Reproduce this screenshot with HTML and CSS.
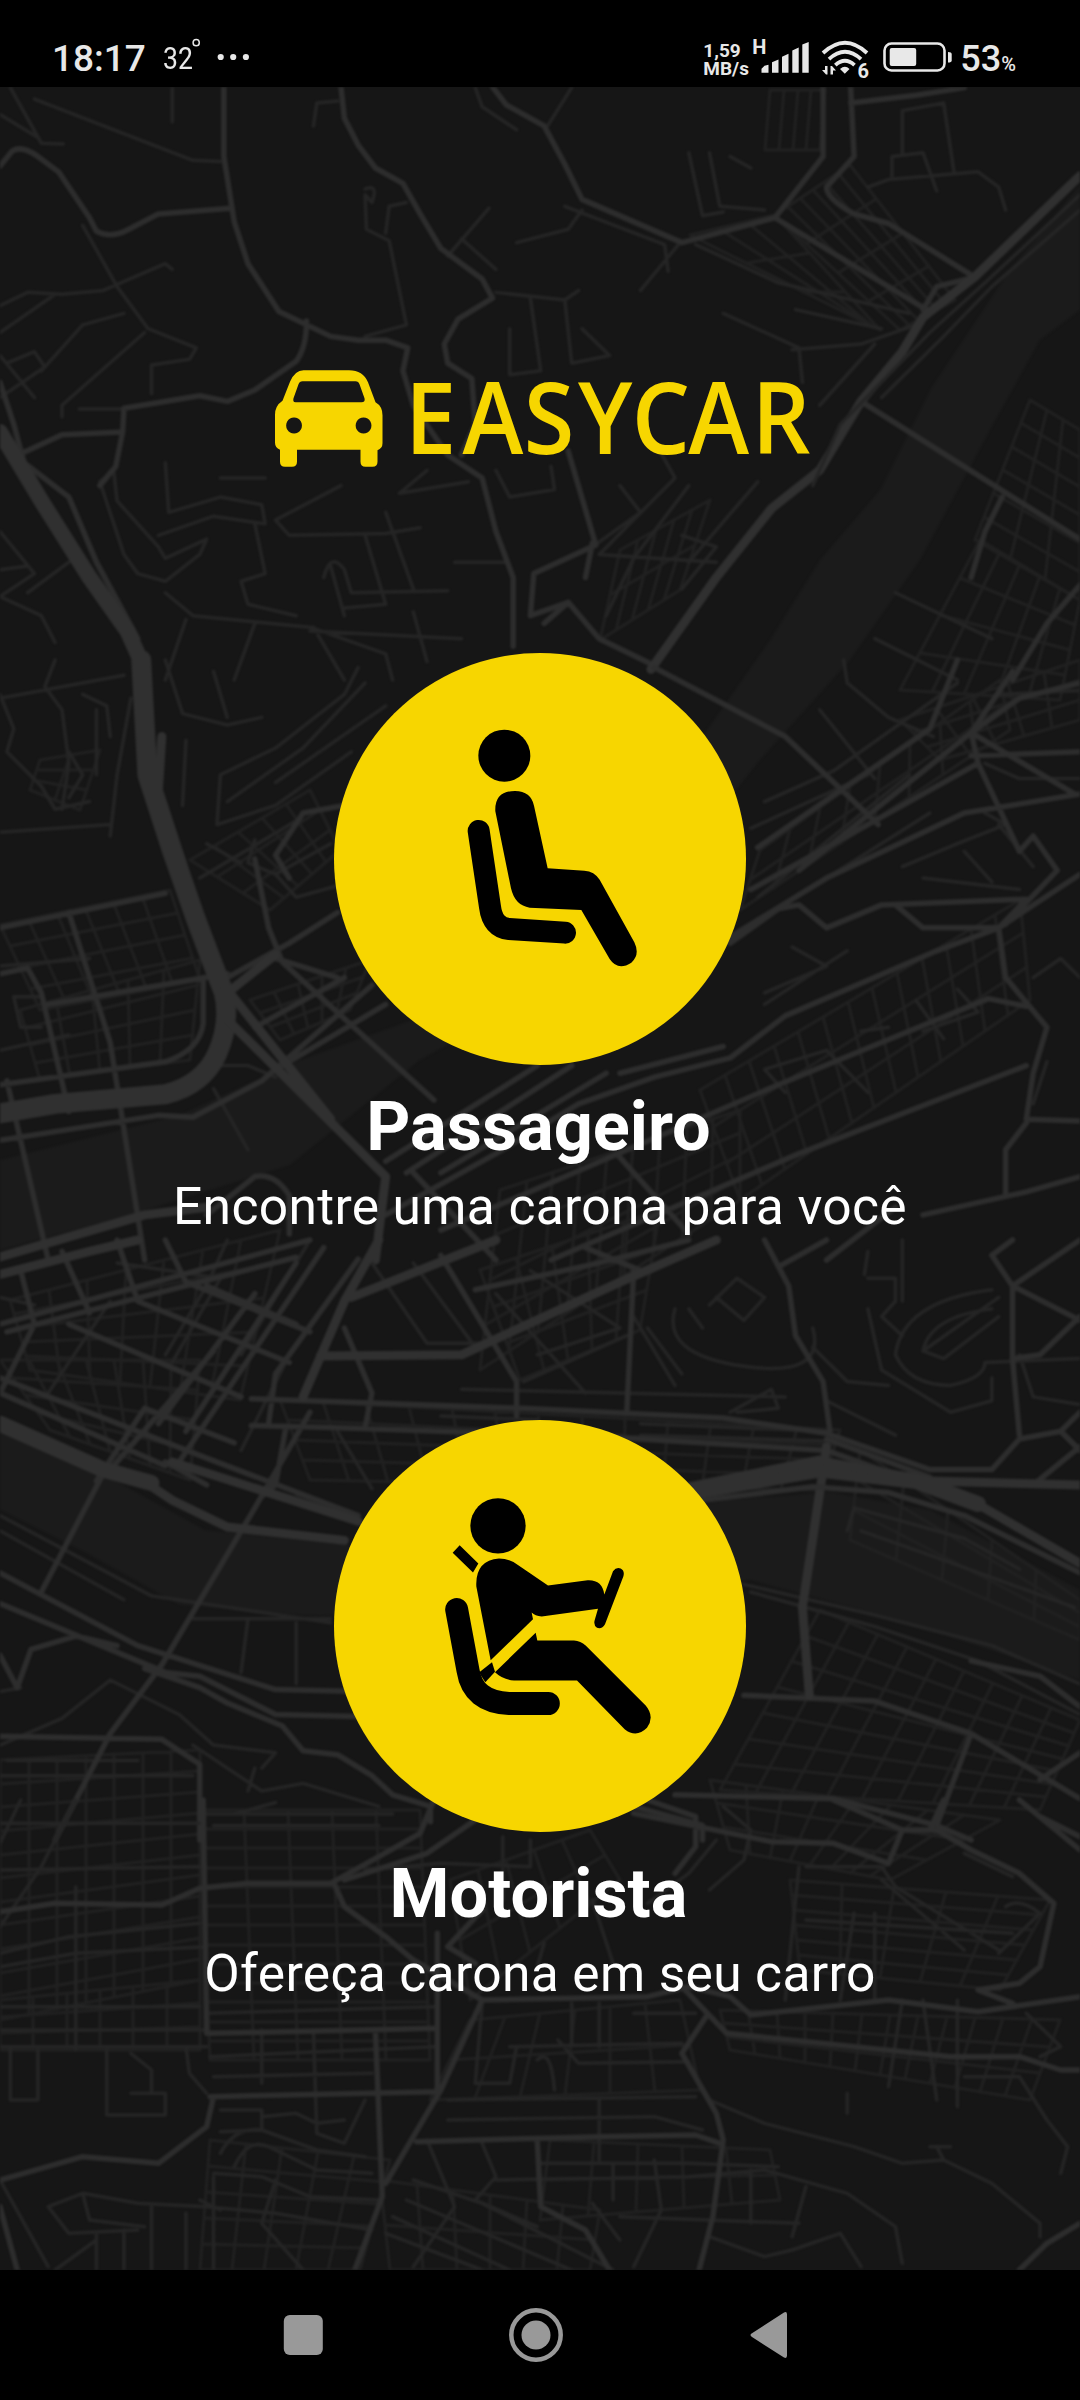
FILE: index.html
```html
<!DOCTYPE html>
<html lang="pt-BR">
<head>
<meta charset="utf-8">
<title>EasyCar</title>
<link rel="stylesheet" href="styles.css">
</head>
<body>
<div class="phone">
  <header class="status">
    <span class="clock">18:17</span>
    <span class="temp">32</span>
    <svg class="more" width="60" height="40" viewBox="190 34 60 40" aria-hidden="true">
      <circle cx="196.200" cy="42.700" r="3.100" fill="none" stroke="#e8e8e8" stroke-width="1.500"/>
      <circle cx="220.700" cy="57" r="3.100"/><circle cx="233.200" cy="57" r="3.100"/><circle cx="245.900" cy="57" r="3.100"/>
    </svg>
    <span class="spacer"></span>
    <span class="speed"><span>1,59</span><span>MB/s</span></span>
    <span class="net">H</span>
    <svg class="signal" width="48" height="32" viewBox="761 42 48 32" aria-hidden="true">
      <path d="M761.500 72.700v-4l3-3 4-1v8zM772 72.700v-10.500l6.500-2.700v13.200zM782 72.700v-16l6.500-3v19zM792.300 72.700V50.500l6.400-3v25.200zM802.300 72.700V44.500l6.400-2.500v30.700z"/>
    </svg>
    <svg class="wifi" width="54" height="46" viewBox="820 39 54 46" aria-hidden="true">
      <g fill="none" stroke="#e8e8e8" stroke-width="3.800"><path d="M823 53Q845 32.500 867 53M829 59.200Q845 44.500 861 59.200M835.300 65.200Q845 56.500 854.500 65.200"/></g>
      <path d="M840 69q5-4.500 9.500 0l-4.700 4.700zM825 66h2.500v8.500h-1.500l-4-4.500h3zM830.500 74.500V66h1.500l4 4.500h-3v4z"/>
      <text x="857.500" y="77.500" class="wifi-gen">6</text>
    </svg>
    <svg class="battery" width="70" height="32" viewBox="882 41 70 32" aria-hidden="true">
      <rect x="884.500" y="43.500" width="60" height="27" rx="7" fill="none" stroke="#e8e8e8" stroke-width="2.600"/>
      <rect x="889.700" y="48" width="26.500" height="18" rx="2"/><path d="M948 52q3.700 0 3.700 2v6.500q0 2-3.700 2z"/>
    </svg>
    <span class="pct">53<small>%</small></span>
  </header>

  <main class="home">
    <svg class="map" viewBox="0 87 1080 2183" aria-hidden="true">
      <g class="water">
        <path d="M1080 185L1010 270 930 390 880 490 820 560 770 640 700 740 560 920 440 1010 300 1060 180 1115 0 1160V1250L130 1215 290 1165 420 1060 600 960 760 760 850 660 920 560 990 430 1040 340 1080 310z"/>
        <path d="M0 1430L105 1475 205 1530 350 1545 540 1540 725 1500 830 1492 930 1510 1080 1590V1680L900 1620 750 1580 540 1620 300 1615 180 1605 90 1555 0 1510z"/>
      </g>
      <g id="blocks"></g>
      <g class="upper">
        <path class="lane" d="M0 90L55 150M15 20L60 165 92 167M50 50L280 210 320 213M0 590L40 555 90 560 150 550 240 480 250 495M120 380L170 540 215 650 285 700 275 730 220 745V820M0 660L80 560M60 760L120 640 180 610M90 880V850L210 660M0 720L50 830M0 830L65 750 50 710 10 740M115 860H180M530 285Q550 270 540 320 L530 300 532 390 565 420 590 640 530 670M560 400L565 330 590 320M650 460L710 335M670 415L720 495M750 425L825 390 845 340M690 20L700 70 750 130M830 20L795 120M930 550L985 430M820 330L965 430 970 500M720 555L820 575 840 550M770 570L785 760 740 770V650M820 575L830 740 885 720 845 650M455 120L460 60 490 55M250 20L250 110M1000 190L1020 355 1050 345M1030 190L1045 330 1110 340M1060 200L1090 230M1050 610L1160 700 1165 790M1150 705L1250 690 1330 640M1270 690L1190 850M1010 430L1130 530 1320 610M1155 600L1280 650M1310 80L1370 60 1385 240M1260 280L1290 260 1420 240 1450 280 1460 340M1295 250V200L1340 190 1360 290M1310 190V80M145 1050L165 1020M165 1020L170 1100 230 1220 240 1250 300 1200 290 1240 240 1310 200 1290 180 1240 145 1050M240 1000L245 1130 320 1090 380 1110 385 1160 310 1140 230 1190M320 1040L385 1040M495 1060L400 1150 420 1190 560 1185 610 1170M560 1130L600 1330M530 1190L560 1370 500 1380M480 1270L500 1400M470 1300Q480 1230 500 1280L510 1340 650 1335M370 1160L385 1290 350 1310 360 1370 430 1400M580 1080L620 1020M580 1080L680 1050M800 1010L805 1070 740 1090 720 1020M900 1060L930 1130 860 1220M955 960L980 1040 870 1240M1000 1060L920 1250 880 1400M990 1190L1040 1220 990 1330M1100 1050L1000 1260M0 1180L50 1290 0 1350 60 1400 80 1470M0 1280L40 1270M660 1260L735 1260M240 1340L280 1400 450 1430 560 1500 570 1568M270 1410L240 1568M370 1420L340 1568M455 1430L500 1568M450 1440L670 1460M600 1390L620 1520M100 1260L40 1340M870 1240L1040 1260M1300 1340L1440 1460M1270 1460L1390 1568"/>
        <path class="street" d="M0 225L18 185Q32 170 55 200L85 240 130 360 140 395Q160 415 185 392L230 350 335 335M325 18L325 200 340 370 360 480 405 605 480 670 520 680 560 680 592 700 585 760 600 850 650 980 700 1040 720 1180 745 1300V1480M445 630Q445 700 430 735L370 810 330 840 290 825 180 858 178 920 90 927 20 985M178 920L168 1010 145 1060M495 18L500 100 520 170 545 230 585 270 610 350 640 440 700 520 715 570 665 625 645 690 650 740 685 780 690 900 670 980M715 18L735 65 790 120 820 220 845 312 990 425 1125 360 1195 200V20M1125 360L1345 600M1235 20L1240 200 1200 280Q1200 310 1240 350L1290 375 1415 515 1360 540 1340 600M1235 60L1330 40 1400 20M825 970L865 1215 775 1290 770 1400 825 1365 870 1460 950 1530M825 1365L790 1420M860 1210L850 1300M1250 840L1470 1090 1568 1200M1455 1090L1430 1180 1410 1300M1568 1320L1520 1420 1470 1568M0 790L20 900 35 1000 100 1090 140 1260 200 1460"/>
        <path class="avenue thin" d="M1568 250L1415 515 1340 620 1310 710 1250 840 1190 1020 1120 1120 1040 1300 945 1540"/>
        <path class="lane" d="M1568 300L1430 530 1350 660 1220 900 1180 1060M1568 340L1440 540 1370 670 1280 830"/>
        <path class="avenue" d="M0 920L60 1100 130 1300 185 1440 205 1520"/>
      </g>
      <g class="middle">
        <path class="lane" d="M80 0L65 70 90 130 100 270 90 390M0 100L180 40M0 90L20 180 10 240 60 330 80 390 130 370M120 90L155 120 160 200M140 130V300M190 100L170 300 160 460M0 450L160 430M100 240L120 300 100 360M240 0L265 140 330 170 380 150M270 210L265 380M310 30L330 150M520 20L500 90 400 230 320 300 315 430 400 380 510 240M530 60L440 230 330 370M560 120L400 320M370 470L360 530 400 560 430 620 490 590M290 570L430 420M400 560L480 480M300 480L350 530M0 800L130 780M20 880H60M20 880L30 960H60M1225 0L1230 60 1290 150 1355 200M1190 130L1270 310M1110 370L1210 290 1390 60M1090 440L1260 300M1320 300L1100 620M1350 400L1130 650M1430 270L1480 310 1568 310M1450 90L1568 80M1310 540L1390 480 1460 430 1430 400M1340 570L1480 600M1400 500L1440 580M1450 430L1500 540M1110 870L1200 800 1150 750M1110 900L1230 760M1330 890L1370 990M1390 860L1420 920 1340 970M1250 970L1290 960M1500 830L1540 780 1568 830M1520 1050L1500 1160M1140 1130L1110 1070 1200 1020 1260 1130M270 1130L300 1060 360 1060 400 1090M310 1120L360 1280M0 1020L100 980"/>
        <path class="street" d="M0 700L240 610M70 900L330 820M0 820L40 805 60 870 100 1180M100 660L160 1000 210 1568M0 1110L240 1050Q290 1020 295 950V830M0 1255L230 1190 280 1195 380 1100 540 850M0 1200L150 1140M10 1100L70 1568M330 830L420 740 490 660M370 520L390 700 410 790 630 1150M420 570L400 510 440 400 500 380M400 780L490 830M950 20L1140 200 1275 430M1390 0L1350 180 1100 490M1470 30L1410 190 1160 550M1568 60L1480 100 1410 190 1420 270 1090 600M1410 190L1560 350M1410 250L1568 240M1420 270L1480 500 1500 460 1535 550 1460 690M1060 740L1130 650 1160 640 1200 700 1280 640 1490 625 1450 700 1340 700 1300 640M1568 560L1450 700 1360 760 1140 930 1060 1040 950 1090 840 1160 720 1290 560 1450M1450 700L1460 830 1520 960 1500 1080 1490 1200 1568 1205M1490 905L1435 885 1130 1110 640 1490M1490 1060L1160 1290 800 1568M1490 1210L1460 1280V1400M1568 350L1400 400 1200 570 900 900M880 1080L640 1340M830 1060L590 1340M780 1060L560 1310M1050 1010L900 1080M300 1450L370 1350Q400 1340 420 1400L420 1500M560 900L410 1060M370 960L500 830M600 1340L720 1568M900 1300L1000 1500M1340 1450L1490 1390 1568 1350M1200 1568L1300 1430"/>
        <path class="avenue wide" d="M205 0L214 300 250 500 285 680 325 870Q335 950 315 1030 295 1110 240 1135L80 1160 0 1185"/>
        <path class="avenue thin" d="M235 200L230 340 290 670M325 850L480 1200M400 770L330 870M330 940L560 1350 545 1568M0 1560L210 1450 300 1430"/>
      </g>
      <g class="lower">
        <path class="lane" d="M0 150L50 170M170 60L320 100 250 320M330 0L300 120 240 300M160 160L70 400M450 0L350 300M420 300L350 550M0 720L220 930 480 1000M0 760L180 940M280 990L480 990M360 990L350 1130M430 1000V1160M540 60L620 270 700 270M600 60L690 280M720 140L850 400M770 80L900 230M780 300L900 230M760 370L910 250M920 200L980 380M940 230L990 350M980 180Q960 300 1080 330T1180 230M1000 180L1020 230M1040 150L1080 210 1110 150 1070 100 1030 170M1260 100L1300 100 1300 160 1280 200 1310 250M1260 30L1255 90M1310 0V160M1440 130Q1310 160 1300 300 1320 380 1380 380 1430 360 1430 320L1568 310M1440 180Q1350 200 1340 290L1370 310 1450 200M1450 150L1340 290M1260 180L1280 340 1380 450 1440 420V360M1180 280L1230 370 1290 380M1480 300L1500 410 1568 430M1200 420L1300 510M670 390L1140 410M1060 450L1120 390 1130 440 1070 450M640 460L780 470M930 480L1200 500M930 510L1200 525M490 500L540 650M1080 900L1270 980 1440 1060 1568 1160M1090 920L1270 1010 1420 1100 1568 1240M1240 700L1400 780 1480 860M1250 760L1360 830 1560 960M1240 700L1230 760M0 1180L30 1170M90 1250L160 1150 260 1240 310 1320 400 1340 380 1380M90 1250L0 1320M0 1400H280M280 1320L380 1440 440 1420 550 1480M370 1380L360 1440M400 1470L340 1500M10 1360H200M300 1500H570M310 1530L550 1530"/>
        <path class="street" d="M0 220L450 0M10 240L430 45M0 360L300 570 520 720M0 400L240 590M30 80L50 220 0 400M90 30L130 190M170 0L200 160 420 320M100 220L350 410M240 0L270 110 450 240M300 120L430 220M470 20L260 580M520 50L400 350 390 480M210 440L140 630M210 440L340 530M310 290L160 600M370 140L230 480M430 60L270 500M365 415L760 440 1050 465 1200 505 1350 600 1440 600 1480 520 1540 500 1568 450M365 485L480 490 880 515 1200 550 1340 640M500 230L540 400 530 490M415 490L400 640 380 670M640 40L750 370V460M690 130L870 60 1000 0M920 80L910 450M850 20L930 80M1110 0L1145 120 1155 250 1195 370 1205 500M1130 70L1200 0M1568 0L1470 120 1470 310 1480 510M1470 0L1440 40 1470 120 1568 210M1470 310L1510 300 1568 200M1540 500L1568 550M1500 640L1568 540M150 610L60 920M450 450L370 700 235 1110 160 1290 80 1568M240 580L300 640M0 870L200 1060 400 1175 520 1180M0 950L240 1130 290 1140 400 1240 520 1245M0 1085L25 1170 45 1070 110 1035 170 1060M210 1120L290 1170 330 1210 410 1270 440 1335 490 1345 540 1400 570 1450 625 1480V1520M0 1297L235 1305 290 1370V1568M1080 1190L1270 1205 1410 1290 1568 1460M1410 1290L1360 1530M1568 1340L1510 1410M980 1450L1210 1460 1360 1530 1410 1568M920 1480L1020 1530V1568M1410 1100L1510 1140 1568 1220M1200 520L1350 620M520 720L430 660"/>
        <path class="avenue" d="M0 480L150 600 220 635"/>
        <path class="avenue thin" d="M200 620L250 680 330 750 500 785M0 90L130 30 200 0M550 0L500 160 440 410M510 150L720 0M465 303L670 300 900 110 1040 0M250 580L520 735M1200 540L1165 960 1175 1190"/>
        <path class="avenue" d="M1000 660L1190 600 1330 630 1420 690"/>
        <path class="avenue thin" d="M1400 670L1568 845M1000 645L1190 575M1200 580L1350 630 1568 640"/>
        <path class="street" d="M1020 680L1180 645 1290 660 1400 720 1568 870"/>
      </g>
      <g class="bottom">
        <path class="lane" d="M110 0L60 200 0 380M0 70H290M0 210L290 200M0 500L110 460 300 440M0 460L100 410 290 370M110 260V750M30 0L0 130M0 620H290M0 690H300M0 740H300M15 740V900H55V750M155 750V945H240V880H190M190 760L220 810V880M270 740L275 820 300 880M300 640L630 620M305 770L630 740M310 830L540 820M455 690L460 1000 500 1030 530 900M380 690L380 850M320 930H380V990L320 995M380 950L430 940 460 970 500 960M320 1060Q340 980 380 990 L460 1050 530 1070M340 1100Q360 1010 390 1040L460 1110 540 1120M310 1120L380 1130 450 1190 550 1200M310 1130L310 1410M400 1140L380 1270 440 1410M70 1220L120 1180 200 1210 300 1220 400 1240 540 1290M70 1220L100 1300 200 1290M120 1180L130 1260 210 1280M140 1300V1410M180 1290V1410M220 1220V1410M270 1240V1410M320 1230L290 1200M80 1410L140 1320M600 1140L700 1210 890 1410M590 1200L830 1410M570 1250L740 1410M560 1300L700 1410M620 1020L660 1220 600 1400M700 1030L720 1130 690 1200 780 1280M720 1140L1000 1130 1110 1110 1230 1180 1300 1280 1310 1390M780 1090H1000L1130 1100M650 900L1010 890M650 960L950 950 1020 990M870 900V1080M700 610L690 850 740 850 750 740M740 740L990 730M810 720L840 790 1000 785M830 610V740M870 610V740M920 640H1010M780 780Q800 740 805 870M890 1090V1200M950 1080L960 1230 920 1400M860 1210L900 1320M900 1250L1160 1270M1090 1110V1270M1030 1310L1110 1370 1150 1350 1220 1300 1250 1400M1170 1160L1150 1310M1030 900L1110 970 1240 1040 1310 1090 1370 1080 1440 1150 1510 1270V1310M1350 1040H1380M1360 1040L1370 1080M0 1140L70 1400M730 110V300M770 120V200L640 190 530 210M860 300L890 490M790 430L780 500M1050 20L1090 90 1080 180 1030 270M1040 120L1000 220 940 310M1170 200H1280L1300 260 1450 450M1160 200L1140 600M1240 340L1220 600M1270 340V600M1170 360L1470 400M1280 240L1400 450M1460 320Q1480 290 1510 340L1450 460M1400 160L1470 230M1490 640L1540 740 1510 770M1390 600V920M1340 600L1360 900M1310 600L1290 860M1230 880V940M1480 830L1400 830M1480 830L1520 960 1550 1040 1540 1120"/>
        <path class="street" d="M0 335L80 310 235 315 290 265 360 250 480 250 550 170 610 100 630 0M500 240L620 160 690 60M295 0L300 700M485 250L500 320 560 410 600 480 700 600 940 590 1000 560 1060 590 1090 645 1290 600 1420 635 1568 590M305 700L635 685M305 890L635 875M635 400V880M545 690L555 1190 515 1410M700 600L640 870 560 1150M700 330L650 440 690 490M605 1025L870 1010 1010 1005 1045 1030M310 890L300 980 230 1090 120 1070 0 1140M990 560L1055 700 1380 770H1480L1540 810 1568 810M1025 650L990 760 1040 940 1050 1020 1035 1250 1015 1410M780 1020L785 1220 850 1290 885 1410M0 1220L25 1410M1568 1270L1520 1330 1480 1410M920 40L1120 125 1210 130 1290 190 1310 90 1210 0M1310 90L1360 90 1410 150 1480 220 1530 310 1510 500 1480 550 1420 570 1470 610M1370 0L1350 90M940 0L1010 50 1010 140 980 220M1480 0L1568 150M1510 50L1568 110"/>
      </g>
    </svg>

    <svg class="logo" width="540" height="100" viewBox="272 368 540 100" role="img" aria-label="EASYCAR">
      <path fill-rule="evenodd" d="M303 370.300h46q14 0 19 12l7.500 20q7 4 7 13v28q0 5-5 7v11.500q0 5-5 5h-7q-5 0-5-5v-12h-63.500v12q0 5-5 5h-7q-5 0-5-5v-12q-5-2-5-7v-28q0-9 7.500-14l7.500-19q5-11.500 13.500-11.500zM302.500 381.200q-3 0-4 3l-5 14q-1 4 2 4h66q4 0 3-4l-5-14q-1-3-4-3zM294 417.500a7.900 8 0 1 0 .1 0zM363.500 417.500a7.900 8 0 1 0 .1 0z"/>
      <text transform="translate(405 454) scale(.92 1)" x="0 62.500 129 188 246.500 308 377" y="0">EASYCAR</text>
    </svg>

    <section class="choice">
      <svg class="badge" viewBox="0 0 412 412" aria-hidden="true">
        <circle class="disc" cx="206" cy="206" r="206"/>
        <g transform="translate(-15 -12.700) scale(.33333)">
          <circle cx="556" cy="346" r="78"/>
          <path d="M529 513Q526 452 588 452 636 453 645 496L686 684 796 691Q826 693 842 718L946 906Q964 943 937 967 897 993 872 956L787 809 632 802Q588 796 576 744z"/>
          <path class="seat" d="M479 572L513 800Q521 862 570 866L738 877"/>
        </g>
      </svg>
      <h1>Passageiro</h1>
      <p class="find">Encontre uma carona para você</p>
    </section>

    <section class="choice">
      <svg class="badge" viewBox="0 0 412 412" aria-hidden="true">
        <circle class="disc" cx="206" cy="206" r="206"/>
        <g transform="translate(-15 -19.500) scale(.33333)">
          <circle cx="537" cy="376" r="83"/>
          <path d="M422 434L478 489 462 516 401 457zM515 779L472 558Q468 480 540 474 573 474 599 495L687 555 806 539Q850 537 856 582L882 512Q892 499 905 504 918 511 913 528L858 671Q849 687 834 682 823 675 827 659L837 625 668 648Q648 646 638 636L642 656zM528 815L650 697 655 720H765Q785 721 800 735L980 915Q1008 948 984 982 952 1014 917 986L774 840H585Q551 837 528 815z"/>
          <path class="seat wide" d="M413 627L447 810Q462 905 570 909H688"/>
          <path d="M480 816L519 785 528 814 499 845z"/>
        </g>
      </svg>
      <h1>Motorista</h1>
      <p class="offer">Ofereça carona em seu carro</p>
    </section>
  </main>

  <nav class="keys" aria-hidden="true">
    <svg width="540" height="64" viewBox="270 2303 540 64">
      <rect x="283.800" y="2315" width="39" height="40" rx="6"/>
      <circle cx="536" cy="2335" r="24.700" fill="none" stroke="#999" stroke-width="4.500"/>
      <circle cx="536" cy="2335" r="14.500"/>
      <path d="M752 2333.300L784 2312.500q3-1.500 3 2v41q0 3.500-3 2L752 2337q-3-2 0-3.700z"/>
    </svg>
  </nav>
</div>
<script src="map.js"></script>
</body>
</html>
```
FILE: styles.css
```css
* { box-sizing: border-box; }
body { margin: 0; background: #000; font-family: Roboto, "Noto Sans", sans-serif; }
.phone { width: 1080px; height: 2400px; display: flex; flex-direction: column; background: #000; overflow: hidden; }

.status { height: 87px; flex: none; display: flex; align-items: flex-start; padding: 0 64px 0 52px; color: #e8e8e8; fill: #e8e8e8; line-height: 1; white-space: nowrap; }
.clock { font-size: 37px; font-weight: 500; width: 111px; margin-top: 40px; }
.temp { font-size: 32px; font-weight: 400; width: 27px; margin-top: 42px; transform: scaleX(.83); transform-origin: left; }
.more { margin-top: 34px; }
.spacer { flex: 1; }
.speed { display: flex; flex-direction: column; font-size: 19px; line-height: 18px; font-weight: 700; width: 49px; margin-top: 42px; }
.net { font-size: 20px; font-weight: 700; width: 9px; margin-top: 37px; }
.signal { margin-top: 42px; margin-right: 11px; }
.wifi { margin-top: 39px; margin-right: 8px; }
.wifi-gen { font: 700 20px/1 Roboto, sans-serif; }
.battery { margin-top: 41px; margin-right: 8px; }
.pct { font-size: 36px; font-weight: 500; margin-top: 41px; }
.pct small { font-size: 20px; font-weight: 500; }

.home { position: relative; height: 2183px; flex: none; display: flex; flex-direction: column; align-items: center; overflow: hidden; background: #161616; }
.map { position: absolute; inset: 0; width: 1080px; height: 2183px; filter: blur(.9px); }
.map path { fill: none; vector-effect: non-scaling-stroke; stroke-linejoin: round; stroke-linecap: round; }
.map .water path { fill: #1b1b1b; }
.map .block { stroke: #212121; stroke-width: 3px; }
.map .lane { stroke: #252525; stroke-width: 3.500px; }
.map .street { stroke: #2d2d2d; stroke-width: 5.500px; }
.map .avenue { stroke: #303030; stroke-width: 16px; }
.map .avenue.thin { stroke-width: 9px; }
.map .avenue.wide { stroke-width: 20px; }
.upper { transform: translate(0, 80px) scale(.68878, .38265); }
.middle { transform: translate(0, 660px) scale(.68878, .38265); }
.lower { transform: translate(0, 1240px) scale(.68878, .38265); }
.bottom { transform: translate(0, 1800px) scale(.68878, .33333); }

.logo { position: relative; flex: none; margin-top: 281px; margin-left: 4px; margin-bottom: 184.700px; fill: #f7d600; overflow: visible; }
.logo text { font: 600 100px/1 "Open Sans", "Noto Sans", sans-serif; }

.choice { position: relative; flex: none; height: 767px; width: 1080px; display: flex; flex-direction: column; align-items: center; color: #fff; text-align: center; }
.badge { width: 412px; height: 412px; flex: none; }
.disc { fill: #f7d600; }
.seat { fill: none; stroke: #000; stroke-width: 66px; stroke-linecap: round; }
.seat.wide { stroke-width: 69px; }
h1 { margin: 22px 0 0; padding-right: 3px; font-size: 68.500px; line-height: 80px; font-weight: 700; }
p { margin: 6.500px 0 0; font-size: 51.500px; line-height: 68px; letter-spacing: .36px; white-space: nowrap; }

.keys { height: 130px; display: flex; justify-content: center; align-items: center; fill: #999; }
```
FILE: map.js
```js
// Fine city blocks: four corners (clockwise), then the number of streets each way.
const blocks = [
  [[775,215],[850,165],[955,300],[900,330],6,4],
  [[690,235],[775,215],[880,330],[860,320],3,3],
  [[770,90],[825,90],[820,150],[765,150],4,1],
  [[620,550],[710,500],[680,590],[600,640],5,2],
  [[1030,400],[1080,430],[1080,600],[975,540],3,6],
  [[980,540],[1080,600],[1060,700],[900,690],5,4],
  [[40,760],[100,750],[80,810],[30,790],2,3],
  [[190,860],[310,790],[340,850],[270,910],5,3],
  [[0,925],[170,890],[200,980],[40,1010],6,4],
  [[20,1010],[200,960],[190,1060],[40,1080],5,4],
  [[250,1000],[370,960],[350,1010],[280,1040],5,3],
  [[700,1090],[1020,900],[1030,1000],[740,1200],13,3],
  [[500,1190],[740,1110],[740,1200],[480,1370],9,4],
  [[760,850],[1000,680],[1010,730],[740,910],8,2],
  [[900,720],[1080,660],[1080,720],[940,760],5,3],
  [[10,1300],[280,1230],[240,1400],[30,1370],7,5],
  [[0,1360],[200,1360],[190,1480],[50,1430],7,4],
  [[480,1270],[660,1210],[640,1330],[520,1380],5,3],
  [[280,1400],[840,1430],[820,1490],[310,1480],13,4],
  [[820,1610],[1080,1720],[1040,1810],[720,1790],9,7],
  [[710,1780],[1000,1820],[890,1880],[730,1850],8,3],
  [[0,1760],[200,1750],[200,1980],[0,2020],7,11],
  [[200,1810],[420,1810],[430,2060],[210,2060],5,13],
  [[450,1880],[590,1830],[620,1880],[470,2000],5,2],
  [[790,1880],[1050,1900],[1000,1990],[800,1970],5,6],
  [[720,2010],[1060,2020],[1030,2100],[730,2050],12,3],
  [[470,2020],[680,2000],[700,2090],[430,2100],6,2],
  [[0,2000],[200,1980],[200,2050],[0,2050],6,3],
  [[210,2140],[390,2160],[360,2270],[200,2270],5,5],
  [[380,2180],[600,2210],[590,2270],[390,2270],6,2],
  [[550,2140],[770,2150],[780,2200],[540,2220],5,2],
  [[860,1450],[1080,1600],[1080,1640],[850,1540],5,3]
];
const mix = (a, b, t) => [a[0] + (b[0] - a[0]) * t, a[1] + (b[1] - a[1]) * t];
const line = (a, b) => `M${a.map(Math.round).join(" ")}L${b.map(Math.round).join(" ")}`;
const host = document.getElementById("blocks");
for (const [a, b, c, d, cols, rows] of blocks) {
  let path = "";
  for (let i = 0; i <= cols; i++) path += line(mix(a, b, i / cols), mix(d, c, i / cols));
  for (let j = 0; j <= rows; j++) path += line(mix(a, d, j / rows), mix(b, c, j / rows));
  const el = document.createElementNS("http://www.w3.org/2000/svg", "path");
  el.setAttribute("class", "block");
  el.setAttribute("d", path);
  host.append(el);
}
```
